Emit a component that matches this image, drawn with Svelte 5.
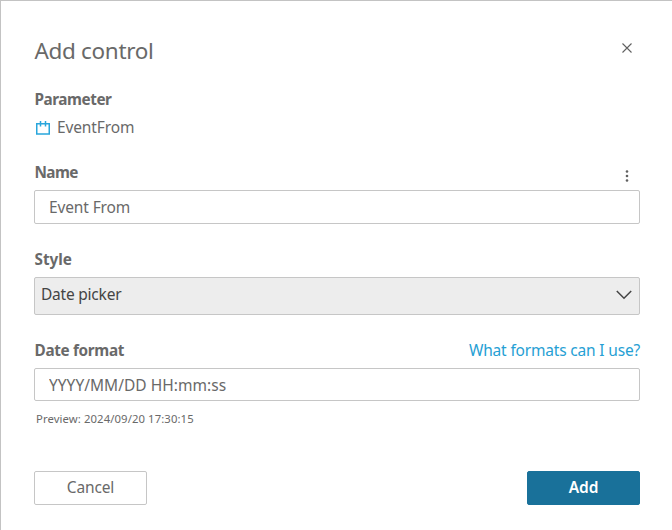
<script>
  let name = $state('Event From');
  let format = $state('YYYY/MM/DD HH:mm:ss');
</script>

<main class="dialog">
  <header>
    <h1>Add control</h1>
    <button class="icon close" aria-label="Close">
      <svg width="12" height="12" viewBox="0 0 12 12"><path d="M1.5 1.5 10.5 10.5M10.5 1.5 1.5 10.5" /></svg>
    </button>
  </header>

  <section class="parameter">
    <span class="label l-param">Parameter</span>
    <div class="value">
      <svg width="14" height="14" viewBox="0 0 14 14"><path d="M.75 2.75H13.25V13H.75ZM4.5 0V5.5M9.5 0V5.5" /></svg>
      <span class="event">EventFrom</span>
    </div>
  </section>

  <section class="name">
    <div class="row">
      <label class="label l-name" for="name">Name</label>
      <button class="icon more" aria-label="More options">
        <svg width="4" height="14" viewBox="0 0 4 14"><circle cx="2" cy="2.5" r="1.3" /><circle cx="2" cy="7" r="1.3" /><circle cx="2" cy="11.5" r="1.3" /></svg>
      </button>
    </div>
    <input id="name" class="i-name" bind:value={name} />
  </section>

  <section class="style">
    <span class="label l-style">Style</span>
    <button class="select">
      <span>Date picker</span>
      <svg width="16" height="10" viewBox="0 0 16 10"><path d="M.8 1 8 8.3 15.2 1" /></svg>
    </button>
  </section>

  <section class="format">
    <div class="row">
      <label class="label l-format" for="format">Date format</label>
      <a href="#formats">What formats can I use?</a>
    </div>
    <input id="format" class="i-format" bind:value={format} />
    <p>Preview: 2024/09/20 17:30:15</p>
  </section>

  <footer>
    <button class="btn cancel"><span>Cancel</span></button>
    <button class="btn add"><span>Add</span></button>
  </footer>
</main>

<style>
  :global(body) { background: #fff; overflow: hidden; }
  .dialog {
    box-sizing: border-box;
    width: 672px;
    height: 530px;
    padding: 33px 32px 0 33px;
    border-top: 1px solid #c3c3c3;
    border-left: 1px solid #c3c3c3;
    color: #696969;
    font: 15.5px/22px 'Noto Sans', 'Open Sans', sans-serif;
    letter-spacing: -.13px;
    display: flex;
    flex-direction: column;
  }
  header, .row, footer { display: flex; justify-content: space-between; }
  h1 { margin: 0; font-size: 22.5px; line-height: 34px; font-weight: 400; letter-spacing: -.33px; padding-left: .5px; }
  button, input { font: inherit; letter-spacing: inherit; color: inherit; box-sizing: border-box; margin: 0; }
  svg { display: block; fill: none; flex: none; }
  .icon { background: none; border: 0; padding: 0; display: flex; }
  .close { margin: 8px 7px 0 0; height: 12px; }
  .close svg { stroke: #606060; stroke-width: 1.1; }
  .parameter { margin-top: 20px; height: 53px; }
  .label { display: block; font-weight: 700; font-size: 15.3px; line-height: 22px; letter-spacing: -.45px; padding-left: .5px; }
  .l-name { letter-spacing: -.6px; }
  .l-style { letter-spacing: 0; }
  .l-format { letter-spacing: -.32px; }
  .value { display: flex; align-items: center; gap: 7px; padding-left: 2px; margin-top: 6px; }
  .value svg { stroke: #29a6dc; stroke-width: 1.5; margin-top: 2px; }
  .name { margin-top: 20px; }
  .row { height: 29px; }
  .more { margin: 8px 11px 0 0; height: 14px; }
  .more svg { fill: #606060; }
  input {
    display: block;
    width: 606px;
    height: 34px;
    padding: 0 14px;
    border: 1px solid #c6c6c6;
    border-radius: 2px;
    background: #fff;
    outline: 0;
  }
  .i-format { letter-spacing: .03px; }
  .style { margin-top: 24px; }
  .select {
    width: 606px;
    height: 38px;
    margin-top: 7px;
    padding: 0 7px 3px 6px;
    display: flex;
    align-items: center;
    justify-content: space-between;
    border: 1px solid #c6c6c6;
    border-radius: 2px;
    background: #ededed;
    color: #444;
    letter-spacing: -.22px;
  }
  .select span { margin-top: -2px; }
  .select svg { stroke: #444; stroke-width: 1.5; }
  .format { margin-top: 24px; }
  .format input { height: 33px; }
  a { color: #26a0d4; text-decoration: none; letter-spacing: -.18px; }
  p { margin: 10px 0 0 2px; font-size: 11.3px; line-height: 16px; letter-spacing: .1px; }
  footer { margin-top: 44px; }
  .btn { width: 113px; height: 34px; border-radius: 2px; border: 1px solid #c6c6c6; background: #fff; padding: 0 0 2px; }
  .add { background: #19719a; border-color: #19719a; color: #fff; font-weight: 600; }
</style>
